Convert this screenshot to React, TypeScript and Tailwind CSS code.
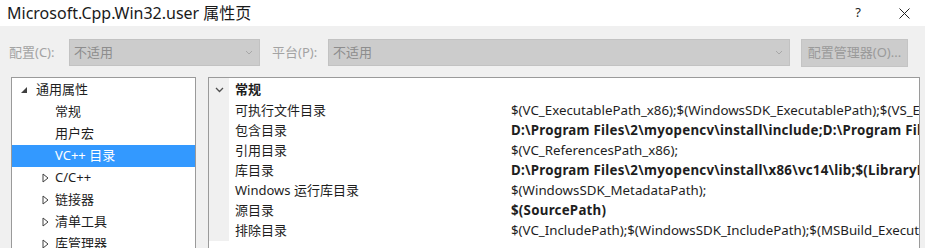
import React from "react";

const FONT = '"Noto Sans", "Noto Sans CJK SC", sans-serif';

function ExpandedTri() {
  return (
    <svg width="8" height="8" viewBox="0 0 8 8" className="block">
      <polygon points="7,1 7,7 1,7" fill="#404040" />
    </svg>
  );
}

function CollapsedTri() {
  return (
    <svg width="7" height="10" viewBox="0 0 7 10" className="block">
      <polygon points="1,1 6,5 1,9" fill="none" stroke="#404040" strokeWidth="1" />
    </svg>
  );
}

function Chevron() {
  return (
    <svg width="9" height="6" viewBox="0 0 9 6" className="block">
      <polyline points="1,1 4.5,4.5 8,1" fill="none" stroke="#505050" strokeWidth="1.3" />
    </svg>
  );
}

function ComboArrow() {
  return (
    <svg width="8" height="5" viewBox="0 0 8 5" className="block">
      <polyline points="1,1 4,4 7,1" fill="none" stroke="#a8a8a8" strokeWidth="1" />
    </svg>
  );
}

type TreeItem = { label: string; level: 0 | 1; kind: "exp" | "col" | "none"; selected?: boolean };

const tree: TreeItem[] = [
  { label: "通用属性", level: 0, kind: "exp" },
  { label: "常规", level: 1, kind: "none" },
  { label: "用户宏", level: 1, kind: "none" },
  { label: "VC++ 目录", level: 1, kind: "none", selected: true },
  { label: "C/C++", level: 1, kind: "col" },
  { label: "链接器", level: 1, kind: "col" },
  { label: "清单工具", level: 1, kind: "col" },
  { label: "库管理器", level: 1, kind: "col" },
];

const props: { name: string; value: string; bold?: boolean }[] = [
  { name: "可执行文件目录", value: "$(VC_ExecutablePath_x86);$(WindowsSDK_ExecutablePath);$(VS_ExecutablePath);$(MSBuild_ExecutablePath)" },
  { name: "包含目录", value: "D:\\Program Files\\2\\myopencv\\install\\include;D:\\Program Files\\2\\myopencv\\install\\include\\opencv", bold: true },
  { name: "引用目录", value: "$(VC_ReferencesPath_x86);" },
  { name: "库目录", value: "D:\\Program Files\\2\\myopencv\\install\\x86\\vc14\\lib;$(LibraryPath)", bold: true },
  { name: "Windows 运行库目录", value: "$(WindowsSDK_MetadataPath);" },
  { name: "源目录", value: "$(SourcePath)", bold: true },
  { name: "排除目录", value: "$(VC_IncludePath);$(WindowsSDK_IncludePath);$(MSBuild_ExecutablePath)" },
];

export default function App() {
  return (
    <div
      className="w-[925px] h-[248px] overflow-hidden bg-[#f0f0f0] text-[#1e1e1e]"
      style={{ fontFamily: FONT }}
    >
      {/* Title bar */}
      <div className="h-[26px] bg-white flex items-center pl-[7px]">
        <span className="text-[16px] leading-none text-[#1a1a1a]">Microsoft.Cpp.Win32.user 属性页</span>
        <span className="ml-auto text-[13px] text-[#222] mr-[38px]">?</span>
        <svg width="11" height="11" viewBox="0 0 11 11" className="mr-[15px]">
          <path d="M0.5 0.5 L10.5 10.5 M10.5 0.5 L0.5 10.5" stroke="#222" strokeWidth="1" />
        </svg>
      </div>

      {/* Toolbar */}
      <div className="h-[51px] flex items-start pt-[13px] text-[13px]">
        <span className="ml-[9px] w-[60px] h-[27px] flex items-center text-[#a3a3a3]">配置(C):</span>
        <div className="w-[191px] h-[27px] bg-[#cccccc] border border-[#c2c2c2] flex items-center pl-[4px] pr-[6px] text-[#8d8d8d]">
          <span>不适用</span>
          <span className="ml-auto"><ComboArrow /></span>
        </div>
        <span className="ml-[12px] w-[56px] h-[27px] flex items-center text-[#a3a3a3]">平台(P):</span>
        <div className="w-[462px] h-[27px] bg-[#cccccc] border border-[#c2c2c2] flex items-center pl-[4px] pr-[6px] text-[#8d8d8d]">
          <span>不适用</span>
          <span className="ml-auto"><ComboArrow /></span>
        </div>
        <div className="ml-[11px] w-[107px] h-[28px] bg-[#cccccc] border border-[#c4c4c4] flex items-center justify-center text-[#9a9a9a]">
          配置管理器(O)...
        </div>
      </div>

      {/* Main */}
      <div className="flex items-start text-[13px]">
        {/* Tree */}
        <div className="ml-[11px] w-[185px] h-[200px] bg-white border border-[#9a9a9a] pt-[1px]">
          {tree.map((t, i) => (
            <div
              key={i}
              className={
                "h-[22px] flex items-center " +
                (t.selected ? "bg-[#3399ff] text-white" : "text-[#1e1e1e]")
              }
            >
              {t.level === 0 ? (
                <>
                  <span className="ml-[8px] w-[8px]"><ExpandedTri /></span>
                  <span className="ml-[8px]">{t.label}</span>
                </>
              ) : (
                <>
                  <span className="ml-[30px] w-[7px]">{t.kind === "col" ? <CollapsedTri /> : null}</span>
                  <span className="ml-[6px]">{t.label}</span>
                </>
              )}
            </div>
          ))}
        </div>

        {/* Property grid */}
        <div className="ml-[12px] w-[712px] h-[200px] bg-white border border-[#9a9a9a] flex">
          <div className="w-[20px] h-[163px] bg-[#f0f0f0] pt-[1px] shrink-0">
            <div className="h-[22px] flex items-center justify-center pl-[1px]">
              <Chevron />
            </div>
          </div>
          <div className="flex-1 min-w-0 pt-[1px]">
            <div className="h-[22px] flex items-center pl-[6px] font-bold">常规</div>
            {props.map((p, i) => (
              <div key={i} className="h-[20px] flex items-center whitespace-nowrap">
                <span className="w-[282px] pl-[6px] shrink-0">{p.name}</span>
                <span
                  className={
                    "overflow-hidden text-[13.3px] " +
                    (p.bold ? "font-bold tracking-[0.25px]" : "")
                  }
                >
                  {p.value}
                </span>
              </div>
            ))}
          </div>
        </div>
      </div>
    </div>
  );
}
